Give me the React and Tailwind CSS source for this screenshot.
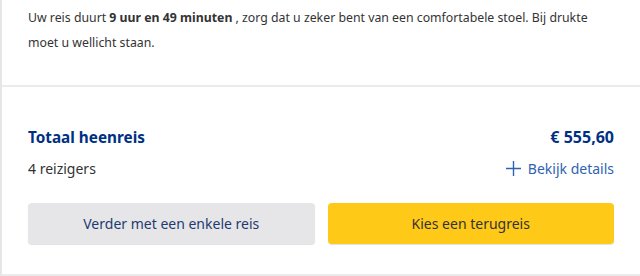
import React from 'react';

const App = () => {
  return (
    <div className="w-[640px] h-[276px] bg-white font-['Noto_Sans',sans-serif] border-l-2 border-[#e6e6e6] border-b-2 border-b-[#ebebeb] overflow-hidden">
      <div className="h-[87px] border-b-2 border-[#ebebeb] pl-[26px] pr-[26px] pt-[5px]">
        <p className="text-[12.3px] leading-[25px] text-[#333333]">
          <span className="whitespace-nowrap">
            Uw reis duurt <span className="font-bold">9 uur en 49 minuten</span> , zorg dat u zeker bent van een comfortabele stoel. Bij drukte
          </span>
          <br />
          moet u wellicht staan.
        </p>
      </div>

      <div className="pl-[26px] pr-[26px] pt-[38px]">
        <div className="flex justify-between items-center h-[24px]">
          <h2 className="text-[15.3px] font-bold text-[#003082]">Totaal heenreis</h2>
          <span className="text-[16px] font-bold text-[#003082]">€ 555,60</span>
        </div>
        <div className="flex justify-between items-center h-[24px] mt-[7px]">
          <span className="text-[14px] text-[#333333]">4 reizigers</span>
          <button className="flex items-center gap-[6px] text-[14px] text-[#2f63b2]">
            <svg width="17" height="17" viewBox="0 0 17 17" fill="none" stroke="currentColor" strokeWidth="1.4">
              <path d="M8.5 1v15M1 8.5h15" />
            </svg>
            Bekijk details
          </button>
        </div>

        <div className="grid grid-cols-2 gap-[13px] mt-[23px]">
          <button className="h-[41px] rounded-[4px] bg-[#e6e6e9] shadow-[0_1px_1px_rgba(0,0,0,0.12)] text-[14px] text-[#1f3a6e]">
            Verder met een enkele reis
          </button>
          <button className="h-[41px] rounded-[4px] bg-[#ffc917] shadow-[0_1px_1px_rgba(0,0,0,0.12)] text-[14px] text-[#333333]">
            Kies een terugreis
          </button>
        </div>
      </div>
    </div>
  );
};

export default App;
